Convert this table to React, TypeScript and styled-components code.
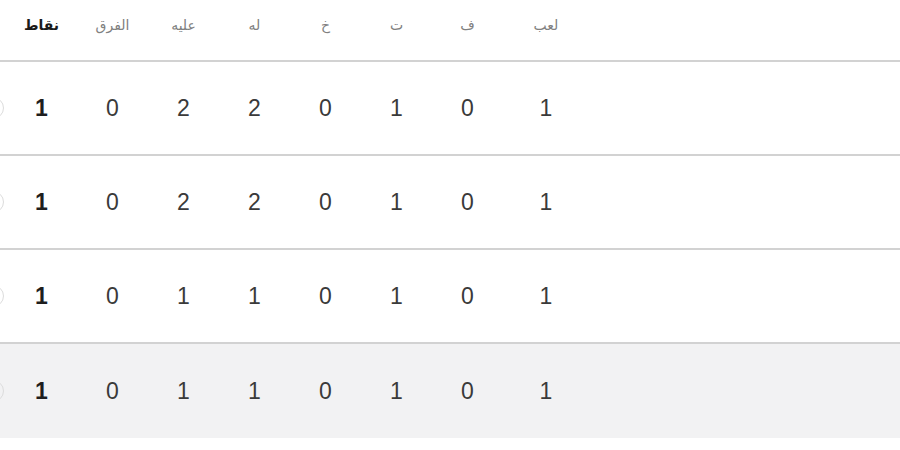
import React from "react";
import styled, { createGlobalStyle } from "styled-components";

const Global = createGlobalStyle`
  html, body { margin: 0; padding: 0; background: #ffffff; }
  body { font-family: "Liberation Sans", "DejaVu Sans", Arial, sans-serif; }
`;

const Table = styled.div`
  direction: rtl;
  width: 900px;
  overflow: hidden;
`;

const Row = styled.div<{ $head?: boolean; $shaded?: boolean; $last?: boolean }>`
  display: grid;
  grid-template-columns: 1fr 86px repeat(7, 71px) 6px;
  align-items: center;
  box-sizing: border-box;
  height: ${(p) => (p.$head ? "62px" : "94px")};
  padding-bottom: ${(p) => (p.$head ? "10px" : "0")};
  border-bottom: ${(p) => (p.$last ? "none" : "2px solid #d2d2d2")};
  background: ${(p) => (p.$shaded ? "#f2f2f3" : "#ffffff")};
`;

const HeadCell = styled.div<{ $strong?: boolean }>`
  text-align: center;
  font-size: 14px;
  color: ${(p) => (p.$strong ? "#1a1a1a" : "#808080")};
  font-weight: ${(p) => (p.$strong ? 700 : 400)};
`;

const Cell = styled.div<{ $strong?: boolean }>`
  text-align: center;
  font-size: 23px;
  color: ${(p) => (p.$strong ? "#1e1e1e" : "#3a3a3a")};
  font-weight: ${(p) => (p.$strong ? 700 : 400)};
`;

const Team = styled.div``;

const FormSlot = styled.div`
  display: flex;
  justify-content: flex-end;
  overflow: visible;
`;

const FormDot = styled.span`
  display: block;
  flex: none;
  width: 20px;
  height: 20px;
  border-radius: 50%;
  border: 1.5px solid #dcdcdc;
  margin-left: -18px;
`;

const headers = ["لعب", "ف", "ت", "خ", "له", "عليه", "الفرق", "نقاط"];

const rows = [
  [1, 0, 1, 0, 2, 2, 0, 1],
  [1, 0, 1, 0, 2, 2, 0, 1],
  [1, 0, 1, 0, 1, 1, 0, 1],
  [1, 0, 1, 0, 1, 1, 0, 1],
];

export default function App() {
  return (
    <>
      <Global />
      <Table>
        <Row $head>
          <Team />
          {headers.map((h, i) => (
            <HeadCell key={h} $strong={i === headers.length - 1}>
              {h}
            </HeadCell>
          ))}
          <div />
        </Row>
        {rows.map((r, ri) => (
          <Row key={ri} $shaded={ri === rows.length - 1} $last={ri === rows.length - 1}>
            <Team />
            {r.map((v, i) => (
              <Cell key={i} $strong={i === r.length - 1}>
                {v}
              </Cell>
            ))}
            <FormSlot>
              <FormDot />
            </FormSlot>
          </Row>
        ))}
      </Table>
    </>
  );
}
